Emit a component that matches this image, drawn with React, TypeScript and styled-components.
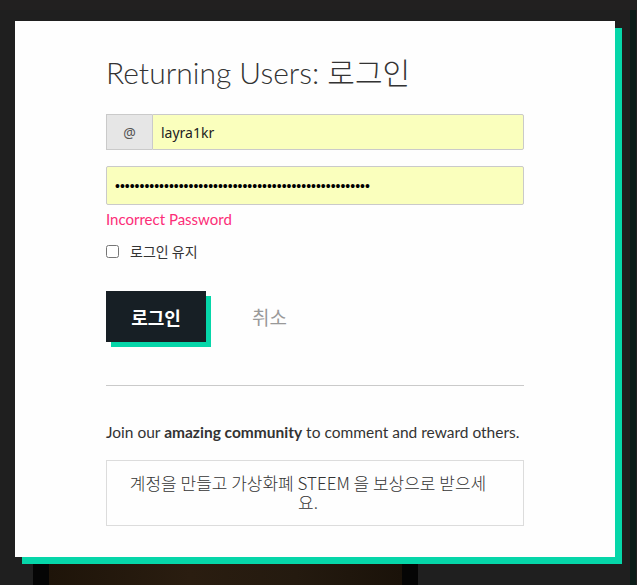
import React from "react";
import styled, { createGlobalStyle } from "styled-components";

const Global = createGlobalStyle`
  html, body { margin: 0; padding: 0; background: #1f1f1f; }
  body { width: 637px; height: 585px; overflow: hidden; }
  #root { width: 637px; height: 585px; }
`;

const Page = styled.div`
  position: relative;
  width: 637px;
  height: 585px;
  background: #1f1f1f;
  display: grid;
  grid-template-columns: 33px 385px 1fr 6px 1px;
  grid-template-rows: 10px 546px 1fr;
  font-family: "Lato", "Noto Sans CJK KR", sans-serif;
`;

const TopBar = styled.div`
  grid-column: 1 / -1;
  grid-row: 1;
  background: #222020;
`;

const SideStrip = styled.div`
  grid-column: 4;
  grid-row: 2 / 4;
  background: #0b1d18;
`;

const PostImage = styled.div`
  grid-column: 2;
  grid-row: 3;
  background: #050505;
  padding: 8px 16px 0 16px;
  display: flex;
`;

const PostImageInner = styled.div`
  flex: 1;
  background: linear-gradient(90deg, #1e1409 0%, #2a1d10 40%, #241a0f 70%, #1a1209 100%);
`;

const Overlay = styled.div`
  position: absolute;
  inset: 0;
  padding: 21px 0 0 15px;
`;

const Modal = styled.div`
  width: 600px;
  height: 536px;
  box-sizing: border-box;
  background: #fefefe;
  box-shadow: 7px 7px 0 0 #06d6a9;
  padding: 29px 91px 0 91px;
  display: flex;
  flex-direction: column;
`;

const Title = styled.h3`
  margin: 0;
  font-family: "Lato", "Noto Sans CJK KR", sans-serif;
  font-weight: 300;
  font-size: 30px;
  line-height: 44px;
  color: #333;
`;

const InputGroup = styled.div`
  margin-top: 20px;
  display: flex;
  height: 36px;
  box-sizing: border-box;
`;

const Addon = styled.span`
  width: 46px;
  box-sizing: border-box;
  background: #e6e6e6;
  border: 1px solid #cacaca;
  border-right: none;
  display: flex;
  align-items: center;
  justify-content: center;
  color: #555;
  font-family: "Noto Sans", sans-serif;
  font-size: 14px;
`;

const TextInput = styled.input<{ $h?: number; $round?: boolean }>`
  flex: 1;
  min-width: 0;
  box-sizing: border-box;
  height: ${(p) => p.$h ?? 36}px;
  background: #faffbd;
  border: 1px solid #cacaca;
  border-radius: ${(p) => (p.$round ? "2px" : "0 2px 2px 0")};
  padding: 0 8px;
  margin: 0;
  outline: none;
  color: #222;
  font-family: "Noto Sans", sans-serif;
  font-size: 14px;
`;

const PasswordRow = styled.div`
  margin-top: 16px;
  display: flex;
`;

const PasswordInput = styled(TextInput)`
  font-family: "Liberation Sans", sans-serif;
  font-size: 14px;
  color: #000;
`;

const ErrorText = styled.div`
  margin-top: 4px;
  color: #fc2d77;
  font-family: "Lato", sans-serif;
  font-size: 15px;
  line-height: 20px;
`;

const CheckRow = styled.label`
  margin-top: 13px;
  display: flex;
  align-items: center;
  gap: 11px;
  font-family: "Noto Sans CJK KR", sans-serif;
  font-size: 14px;
  color: #333;
  line-height: 18px;
`;

const Check = styled.input`
  margin: 0;
  width: 13px;
  height: 13px;
`;

const Actions = styled.div`
  margin-top: 31px;
  display: flex;
  align-items: center;
  gap: 46px;
`;

const PrimaryButton = styled.button`
  width: 100px;
  height: 51px;
  border: none;
  border-radius: 0;
  background: #171f25;
  color: #fff;
  box-shadow: 5px 5px 0 0 #06d6a9;
  font-family: "Noto Sans CJK KR", sans-serif;
  font-weight: 700;
  font-size: 18px;
  padding: 0;
  cursor: pointer;
`;

const CancelLink = styled.span`
  color: #999;
  font-family: "Noto Sans CJK KR", sans-serif;
  font-size: 19px;
  cursor: pointer;
`;

const Divider = styled.hr`
  margin: 43px 0 0 0;
  border: none;
  border-top: 1px solid #cacaca;
  height: 0;
`;

const JoinText = styled.p`
  margin: 36px 0 0 0;
  font-family: "Lato", sans-serif;
  font-size: 15.5px;
  line-height: 20px;
  color: #333;
  b { font-weight: 700; }
`;

const SignupBox = styled.div`
  margin-top: 18px;
  width: 418px;
  height: 66px;
  box-sizing: border-box;
  border: 1px solid #dcdcdc;
  padding: 0 14px 2px 0;
  display: flex;
  align-items: center;
  justify-content: center;
  text-align: center;
  font-family: "Noto Sans CJK KR", sans-serif;
  font-weight: 300;
  font-size: 17px;
  line-height: 19px;
  color: #333;
`;

export default function App() {
  return (
    <>
      <Global />
      <Page>
        <TopBar />
        <SideStrip />
        <PostImage>
          <PostImageInner />
        </PostImage>
        <Overlay>
          <Modal>
            <Title>Returning Users: 로그인</Title>
            <InputGroup>
              <Addon>@</Addon>
              <TextInput type="text" readOnly value="layra1kr" />
            </InputGroup>
            <PasswordRow>
              <PasswordInput
                $round
                $h={39}
                type="password"
                readOnly
                value={"x".repeat(52)}
              />
            </PasswordRow>
            <ErrorText>Incorrect Password</ErrorText>
            <CheckRow>
              <Check type="checkbox" />
              로그인 유지
            </CheckRow>
            <Actions>
              <PrimaryButton>로그인</PrimaryButton>
              <CancelLink>취소</CancelLink>
            </Actions>
            <Divider />
            <JoinText>
              Join our <b>amazing community</b> to comment and reward others.
            </JoinText>
            <SignupBox>
              계정을 만들고 가상화폐 STEEM 을 보상으로 받으세
              <br />
              요.
            </SignupBox>
          </Modal>
        </Overlay>
      </Page>
    </>
  );
}
